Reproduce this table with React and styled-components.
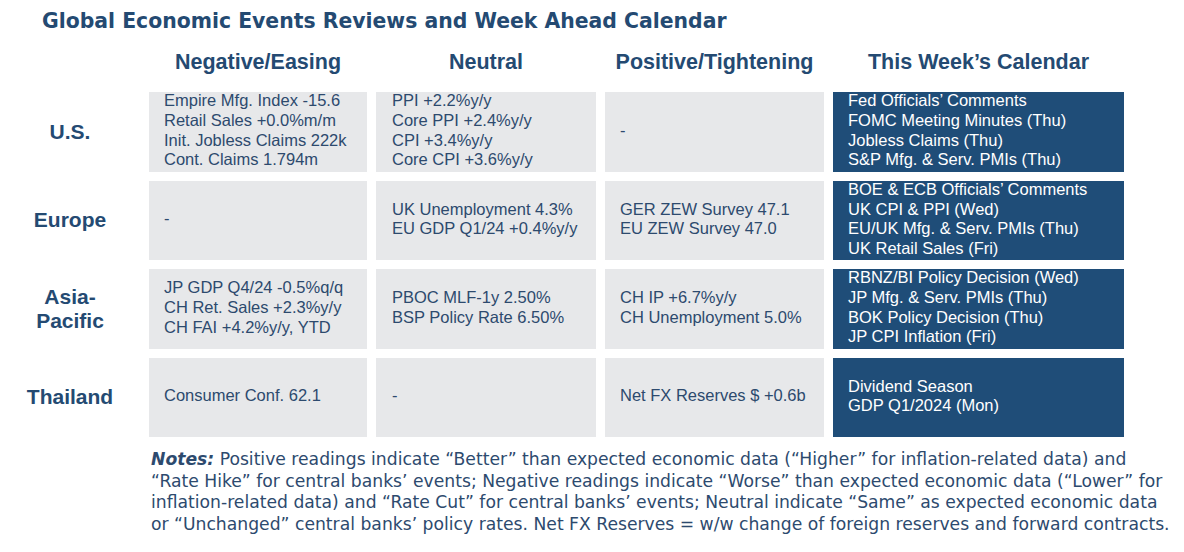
import React from "react";
import styled, { createGlobalStyle } from "styled-components";

const Global = createGlobalStyle`
  html, body { margin: 0; padding: 0; background: #ffffff; }
  body { font-family: "Liberation Sans", Arial, sans-serif; }
`;

const Page = styled.div`
  width: 1184px;
  height: 552px;
  box-sizing: border-box;
  padding-top: 8px;
  overflow: hidden;
`;

const Title = styled.h1`
  margin: 0;
  padding-left: 42px;
  font-family: "DejaVu Sans", "Liberation Sans", sans-serif;
  font-size: 20.4px;
  line-height: 26px;
  font-weight: 700;
  color: #244a72;
  white-space: nowrap;
`;

const Table = styled.div`
  margin-top: 15px;
  display: grid;
  grid-template-columns: 140px 218px 220px 219px 291px;
  column-gap: 9px;
  row-gap: 9px;
`;

const HeaderCell = styled.div`
  text-align: center;
  font-size: 21.5px;
  line-height: 26px;
  font-weight: 700;
  color: #244a72;
  padding-bottom: 8px;
  white-space: nowrap;
`;

const RowLabel = styled.div`
  display: flex;
  align-items: center;
  justify-content: center;
  text-align: center;
  font-size: 21px;
  line-height: 24px;
  font-weight: 700;
  color: #244a72;
`;

const Cell = styled.div`
  height: 79.5px;
  box-sizing: border-box;
  padding-left: ${(p) => (p.$pad ? p.$pad : 15)}px;
  padding-bottom: 2px;
  display: flex;
  flex-direction: column;
  justify-content: center;
  background: ${(p) => (p.$dark ? "#1f4d78" : "#e7e8ea")};
  color: ${(p) => (p.$dark ? "#ffffff" : "#2d4a6e")};
  font-size: 16.5px;
  line-height: 19.7px;
  white-space: nowrap;
`;

const Line = styled.div``;

const Notes = styled.p`
  margin: 12px 0 0 151px;
  font-family: "DejaVu Sans", "Liberation Sans", sans-serif;
  font-size: 17.2px;
  line-height: 21.7px;
  color: #2d4a6e;
  white-space: nowrap;
`;

const NotesLabel = styled.b`
  font-style: italic;
`;

const headers = [
  "Negative/Easing",
  "Neutral",
  "Positive/Tightening",
  "This Week\u2019s Calendar",
];

const rows = [
  {
    label: ["U.S."],
    cells: [
      ["Empire Mfg. Index -15.6", "Retail Sales +0.0%m/m", "Init. Jobless Claims 222k", "Cont. Claims 1.794m"],
      ["PPI +2.2%y/y", "Core PPI +2.4%y/y", "CPI +3.4%y/y", "Core CPI +3.6%y/y"],
      ["-"],
      ["Fed Officials\u2019 Comments", "FOMC Meeting Minutes (Thu)", "Jobless Claims (Thu)", "S&P Mfg. & Serv. PMIs (Thu)"],
    ],
  },
  {
    label: ["Europe"],
    cells: [
      ["-"],
      ["UK Unemployment 4.3%", "EU GDP Q1/24 +0.4%y/y"],
      ["GER ZEW Survey 47.1", "EU ZEW Survey 47.0"],
      ["BOE & ECB Officials\u2019 Comments", "UK CPI & PPI (Wed)", "EU/UK Mfg. & Serv. PMIs (Thu)", "UK Retail Sales (Fri)"],
    ],
  },
  {
    label: ["Asia-", "Pacific"],
    cells: [
      ["JP GDP Q4/24 -0.5%q/q", "CH Ret. Sales +2.3%y/y", "CH FAI +4.2%y/y, YTD"],
      ["PBOC MLF-1y 2.50%", "BSP Policy Rate 6.50%"],
      ["CH IP +6.7%y/y", "CH Unemployment 5.0%"],
      ["RBNZ/BI Policy Decision (Wed)", "JP Mfg. & Serv. PMIs (Thu)", "BOK Policy Decision (Thu)", "JP CPI Inflation (Fri)"],
    ],
  },
  {
    label: ["Thailand"],
    cells: [
      ["Consumer Conf. 62.1"],
      ["-"],
      ["Net FX Reserves $ +0.6b"],
      ["Dividend Season", "GDP Q1/2024 (Mon)"],
    ],
  },
];

export default function App() {
  return (
    <Page>
      <Global />
      <Title>Global Economic Events Reviews and Week Ahead Calendar</Title>
      <Table>
        <div />
        {headers.map((h) => (
          <HeaderCell key={h}>{h}</HeaderCell>
        ))}
        {rows.map((r, ri) => (
          <React.Fragment key={ri}>
            <RowLabel>
              <div>
                {r.label.map((l) => (
                  <Line key={l}>{l}</Line>
                ))}
              </div>
            </RowLabel>
            {r.cells.map((c, ci) => (
              <Cell key={ci} $dark={ci === 3} $pad={ci === 1 ? 16 : 15}>
                {c.map((t, ti) => (
                  <Line key={ti}>{t}</Line>
                ))}
              </Cell>
            ))}
          </React.Fragment>
        ))}
      </Table>
      <Notes>
        <NotesLabel>Notes:</NotesLabel> Positive readings indicate “Better” than expected economic data (“Higher” for inflation-related data) and
        <br />
        “Rate Hike” for central banks’ events; Negative readings indicate “Worse” than expected economic data (“Lower” for
        <br />
        inflation-related data) and “Rate Cut” for central banks’ events; Neutral indicate “Same” as expected economic data
        <br />
        or “Unchanged” central banks’ policy rates. Net FX Reserves = w/w change of foreign reserves and forward contracts.
      </Notes>
    </Page>
  );
}
